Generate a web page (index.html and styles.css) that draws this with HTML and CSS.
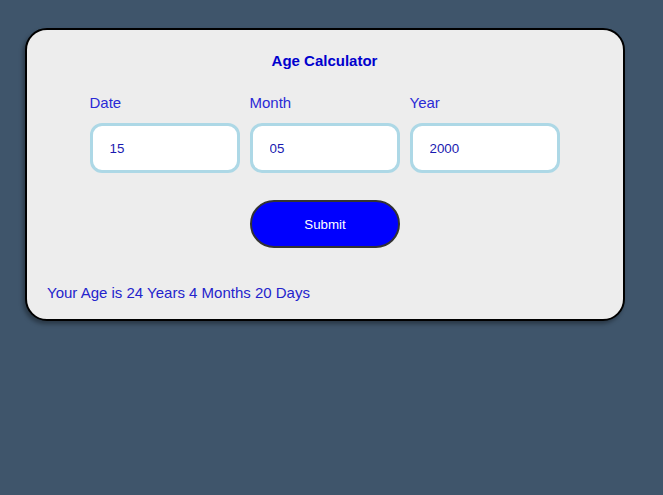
FILE: index.html
```html
<!DOCTYPE html>
<html>
<head>
<meta charset="utf-8">
<link rel="stylesheet" href="styles.css">
</head>
<body>
<div class="card">
  <h1 class="title">Age Calculator</h1>
  <div class="fields">
    <div class="field">
      <label class="label">Date</label>
      <input class="input" type="text" value="15">
    </div>
    <div class="field">
      <label class="label">Month</label>
      <input class="input" type="text" value="05">
    </div>
    <div class="field">
      <label class="label">Year</label>
      <input class="input" type="text" value="2000">
    </div>
  </div>
  <div class="actions">
    <button class="submit">Submit</button>
  </div>
  <p class="result">Your Age is 24 Years 4 Months 20 Days</p>
</div>
</body>
</html>
```
FILE: styles.css
```css
html, body {
  margin: 0;
  padding: 0;
}
body {
  background: #3f556b;
  font-family: "Liberation Sans", Arial, sans-serif;
  padding: 28px 0 0 25px;
  height: 495px;
  box-sizing: border-box;
}
.card {
  width: 600px;
  box-sizing: border-box;
  background: #ededed;
  border: 2px solid #000;
  border-radius: 22px;
  box-shadow: -2px 3px 4px rgba(0, 0, 0, 0.35);
  padding: 23px 20px 17px 19px;
}
.title {
  margin: 0;
  text-align: center;
  font-size: 15px;
  line-height: 16px;
  font-weight: bold;
  color: #0000cd;
}
.fields {
  display: flex;
  justify-content: center;
  gap: 10px;
  margin-top: 25px;
}
.field {
  display: flex;
  flex-direction: column;
  width: 150px;
}
.label {
  font-size: 15px;
  line-height: 18px;
  color: #2a2ad6;
}
.input {
  margin-top: 11px;
  width: 150px;
  height: 50px;
  box-sizing: border-box;
  border: 3px solid #add8e6;
  border-radius: 12px;
  background: #fff;
  padding: 0 16px 0 17px;
  font-family: "Liberation Sans", Arial, sans-serif;
  font-size: 13.33px;
  color: #1a1ab0;
  outline: none;
}
.actions {
  display: flex;
  justify-content: center;
  margin-top: 27px;
}
.submit {
  width: 150px;
  height: 48px;
  border: 2px solid #333;
  border-radius: 24px;
  background: #0000ff;
  color: #fff;
  font-family: "Liberation Sans", Arial, sans-serif;
  font-size: 13.33px;
  margin-left: 1px;
}
.result {
  margin: 36px 0 0 1px;
  font-size: 15px;
  line-height: 18px;
  color: #2424cc;
}
```
